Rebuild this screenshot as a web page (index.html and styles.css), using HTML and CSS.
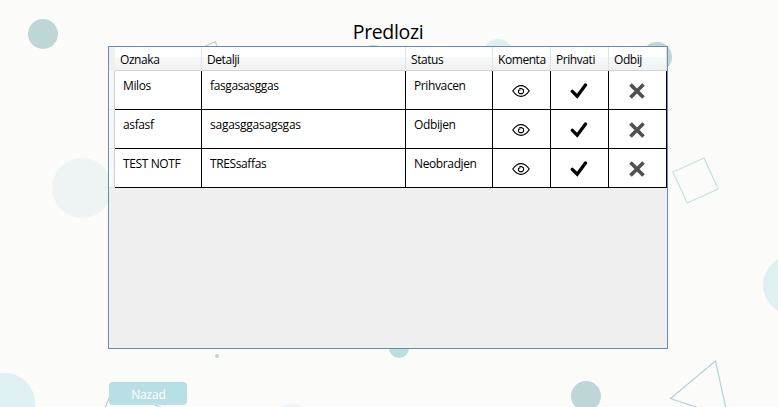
FILE: index.html
```html
<!DOCTYPE html>
<html lang="sr">
<head>
<meta charset="utf-8">
<title>Predlozi</title>
<link rel="stylesheet" href="styles.css">
</head>
<body>
<svg class="backdrop" viewBox="0 0 778 407" aria-hidden="true">
  <g fill="#bed6d6"><circle cx="43" cy="34" r="15"/><circle cx="657" cy="57" r="15"/><circle cx="373" cy="60" r="15"/><circle cx="586" cy="396" r="15"/><circle cx="217" cy="356" r="2"/></g>
  <g fill="#def0f2"><circle cx="498" cy="54" r="15"/><circle cx="5" cy="403" r="30"/><circle cx="792.5" cy="285" r="29.5"/></g>
  <g fill="#eef4f4"><circle cx="82" cy="188" r="30"/><circle cx="292" cy="434" r="30"/></g>
  <circle cx="399" cy="348" r="10" fill="#bddddf"/>
  <g fill="none" stroke="#b4d2d5" stroke-width="1.2"><path d="M715.5 361 670.5 398.5 728 418Z"/><path d="M185 55.500 215.500 41.500 221 60"/><path d="M105 408 112 391M152 403.500 162 408"/></g>
  <path d="M673 172 704 158 718.200 189 687.200 203Z" fill="none" stroke="#c6e0e3" stroke-width="1.2"/>
</svg>
<svg class="symbols" aria-hidden="true">
  <symbol id="eye" viewBox="0 0 18 14"><path d="M.8 7Q4.500 1.700 9 1.700T17.200 7Q13.500 12.300 9 12.300T.8 7Z" fill="none" stroke="#000" stroke-width="1.200"/><path d="M7.300 4.600H9.500L11.500 5.800V8.300L10.200 9.600H7.600L6.500 8.300V6.200L8.300 6" fill="none" stroke="#000" stroke-width="1.100"/></symbol>
  <symbol id="check" viewBox="0 0 18 16"><path d="M2.300 8.300 7.200 13.200 15.500 2" fill="none" stroke="#000" stroke-width="3.300" stroke-linecap="round"/></symbol>
  <symbol id="cross" viewBox="0 0 16 16"><path d="M2.800 2.800 13.200 13.200M13.200 2.800 2.800 13.200" fill="none" stroke="#505050" stroke-width="3.700" stroke-linecap="square"/></symbol>
</svg>
<main class="page">
  <h1 class="title">Predlozi</h1>
  <section class="grid">
    <div class="row head"><span class="corner"></span><span class="th">Oznaka</span><span class="th">Detalji</span><span class="th">Status</span><span class="th">Komenta</span><span class="th">Prihvati</span><span class="th">Odbij</span></div>
    <div class="row"><span class="handle"></span><span class="td">Milos</span><span class="td">fasgasasggas</span><span class="td">Prihvacen</span><span class="td action"><svg class="eye"><use href="#eye"/></svg></span><span class="td action"><svg class="check"><use href="#check"/></svg></span><span class="td action"><svg class="cross"><use href="#cross"/></svg></span></div>
    <div class="row"><span class="handle"></span><span class="td">asfasf</span><span class="td wide">sagasggasagsgas</span><span class="td">Odbijen</span><span class="td action"><svg class="eye"><use href="#eye"/></svg></span><span class="td action"><svg class="check"><use href="#check"/></svg></span><span class="td action"><svg class="cross"><use href="#cross"/></svg></span></div>
    <div class="row"><span class="handle"></span><span class="td">TEST NOTF</span><span class="td">TRESsaffas</span><span class="td">Neobradjen</span><span class="td action"><svg class="eye"><use href="#eye"/></svg></span><span class="td action"><svg class="check"><use href="#check"/></svg></span><span class="td action"><svg class="cross"><use href="#cross"/></svg></span></div>
  </section>
  <button class="back">Nazad</button>
</main>
</body>
</html>
```
FILE: styles.css
```css
* { box-sizing: border-box; }
body {
  margin: 0;
  height: 407px;
  overflow: hidden;
  background: #fbfcfa;
  color: #000;
  font: 12px/16px "Open Sans", "Noto Sans", sans-serif;
}
.backdrop { position: absolute; top: 0; left: 0; width: 778px; height: 407px; }
.symbols { position: absolute; width: 0; height: 0; }
.page {
  position: relative;
  width: 560px;
  margin-left: 108px;
  padding-top: 18px;
}
.title {
  margin: 0;
  height: 28px;
  font-size: 19.5px;
  line-height: 28px;
  font-weight: 400;
  text-align: center;
  letter-spacing: -0.35px;
}
.grid {
  height: 303px;
  border: 1px solid #688caf;
  background: #efefef;
}
.row {
  display: grid;
  grid-template-columns: 6px 87px 204px 87px 58px 58px 58px;
  height: 39px;
}
.head { height: 24px; }
.corner { background: #f0f0f0; }
.th {
  padding: 5px 0 0 5px;
  white-space: nowrap;
  letter-spacing: -0.43px;
  border-right: 1px solid #e2e3e5;
  border-bottom: 1px solid #d2d3d4;
  background: linear-gradient(#fff 0 10px, #f7f8fa 10px, #f1f2f4);
}
.handle {
  border-right: 1px solid #cfcfcf;
  border-bottom: 1px solid #e4e4e4;
  background: linear-gradient(90deg, #fff, #f3f3f3);
}
.td {
  padding: 7px 0 0 8px;
  white-space: nowrap;
  letter-spacing: -0.38px;
  border-right: 1px solid #000;
  border-bottom: 1px solid #000;
  background: #fff;
}
.wide { letter-spacing: -0.25px; }
.action {
  display: flex;
  align-items: center;
  justify-content: center;
  padding: 1px 1px 0 0;
}
.eye { width: 18px; height: 14px; }
.check { width: 18px; height: 16px; }
.cross { width: 16px; height: 16px; }
.back {
  display: block;
  width: 78px;
  height: 23px;
  margin: 33px 0 0 1px;
  padding: 2px 0 0 1px;
  border: 0;
  border-radius: 4px;
  background: #b9dfe6;
  color: #fff;
  font: inherit;
  letter-spacing: -0.15px;
}
```
